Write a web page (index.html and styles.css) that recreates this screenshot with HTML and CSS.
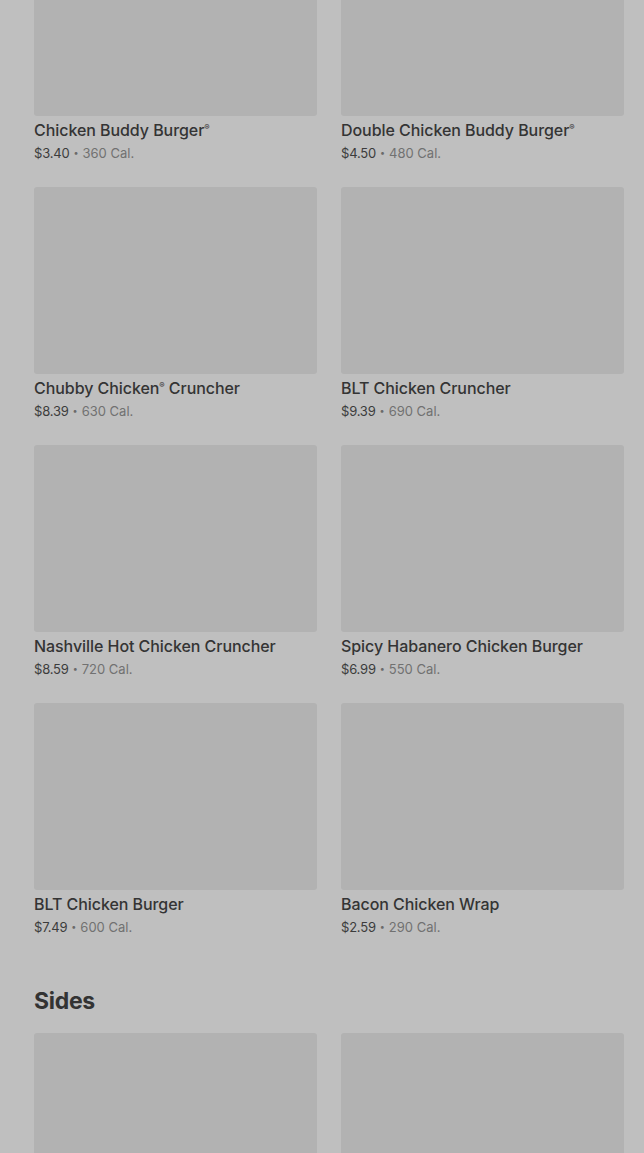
FILE: index.html
```html
<!DOCTYPE html>
<html lang="en">
<head>
<meta charset="utf-8">
<title>Menu</title>
<link rel="stylesheet" href="styles.css">
</head>
<body>
<main class="menu">
  <section class="section">
    <div class="grid">
      <div class="item"><div class="thumb"></div><div class="name">Chicken Buddy Burger<sup>®</sup></div><div class="meta"><span class="price">$3.40</span><span class="dot">•</span><span class="cal">360 Cal.</span></div></div>
      <div class="item"><div class="thumb"></div><div class="name">Double Chicken Buddy Burger<sup>®</sup></div><div class="meta"><span class="price">$4.50</span><span class="dot">•</span><span class="cal">480 Cal.</span></div></div>
      <div class="item"><div class="thumb"></div><div class="name">Chubby Chicken<sup>®</sup> Cruncher</div><div class="meta"><span class="price">$8.39</span><span class="dot">•</span><span class="cal">630 Cal.</span></div></div>
      <div class="item"><div class="thumb"></div><div class="name">BLT Chicken Cruncher</div><div class="meta"><span class="price">$9.39</span><span class="dot">•</span><span class="cal">690 Cal.</span></div></div>
      <div class="item"><div class="thumb"></div><div class="name">Nashville Hot Chicken Cruncher</div><div class="meta"><span class="price">$8.59</span><span class="dot">•</span><span class="cal">720 Cal.</span></div></div>
      <div class="item"><div class="thumb"></div><div class="name">Spicy Habanero Chicken Burger</div><div class="meta"><span class="price">$6.99</span><span class="dot">•</span><span class="cal">550 Cal.</span></div></div>
      <div class="item"><div class="thumb"></div><div class="name">BLT Chicken Burger</div><div class="meta"><span class="price">$7.49</span><span class="dot">•</span><span class="cal">600 Cal.</span></div></div>
      <div class="item"><div class="thumb"></div><div class="name">Bacon Chicken Wrap</div><div class="meta"><span class="price">$2.59</span><span class="dot">•</span><span class="cal">290 Cal.</span></div></div>
    </div>
  </section>
  <section class="section">
    <h2 class="heading">Sides</h2>
    <div class="grid">
      <div class="item"><div class="thumb"></div></div>
      <div class="item"><div class="thumb"></div></div>
    </div>
  </section>
</main>
</body>
</html>
```
FILE: styles.css
```css
html, body {
  margin: 0;
  padding: 0;
  background: #bfbfbf;
  overflow: hidden;
}
body {
  font-family: Inter, "Liberation Sans", sans-serif;
  color: #353535;
  height: 1153px;
}
.menu {
  margin-top: -71px;
  padding: 0 20px 0 34px;
}
.section + .section {
  margin-top: 51px;
}
.grid {
  display: grid;
  grid-template-columns: 283px 283px;
  column-gap: 24px;
  row-gap: 25px;
}
.item {
  display: flex;
  flex-direction: column;
}
.thumb {
  height: 187px;
  background: #b2b2b2;
  border-radius: 3px;
}
.name {
  margin-top: 4px;
  font-size: 16px;
  font-weight: 500;
  line-height: 20px;
  color: #343434;
  letter-spacing: -0.06px;
}
.name sup {
  font-size: 8px;
  vertical-align: 6px;
  line-height: 0;
}
.meta {
  margin-top: 4px;
  font-size: 13px;
  line-height: 18px;
  display: flex;
  align-items: center;
}
.price {
  color: #3c3c3c;
  letter-spacing: -0.2px;
}
.dot {
  color: #6a6a6a;
  font-size: 9px;
  margin: 0 4px;
}
.cal {
  color: #717171;
}
.heading {
  margin: 0 0 18px;
  font-size: 23px;
  line-height: 28px;
  font-weight: 700;
  color: #333;
  letter-spacing: -0.3px;
}
```
